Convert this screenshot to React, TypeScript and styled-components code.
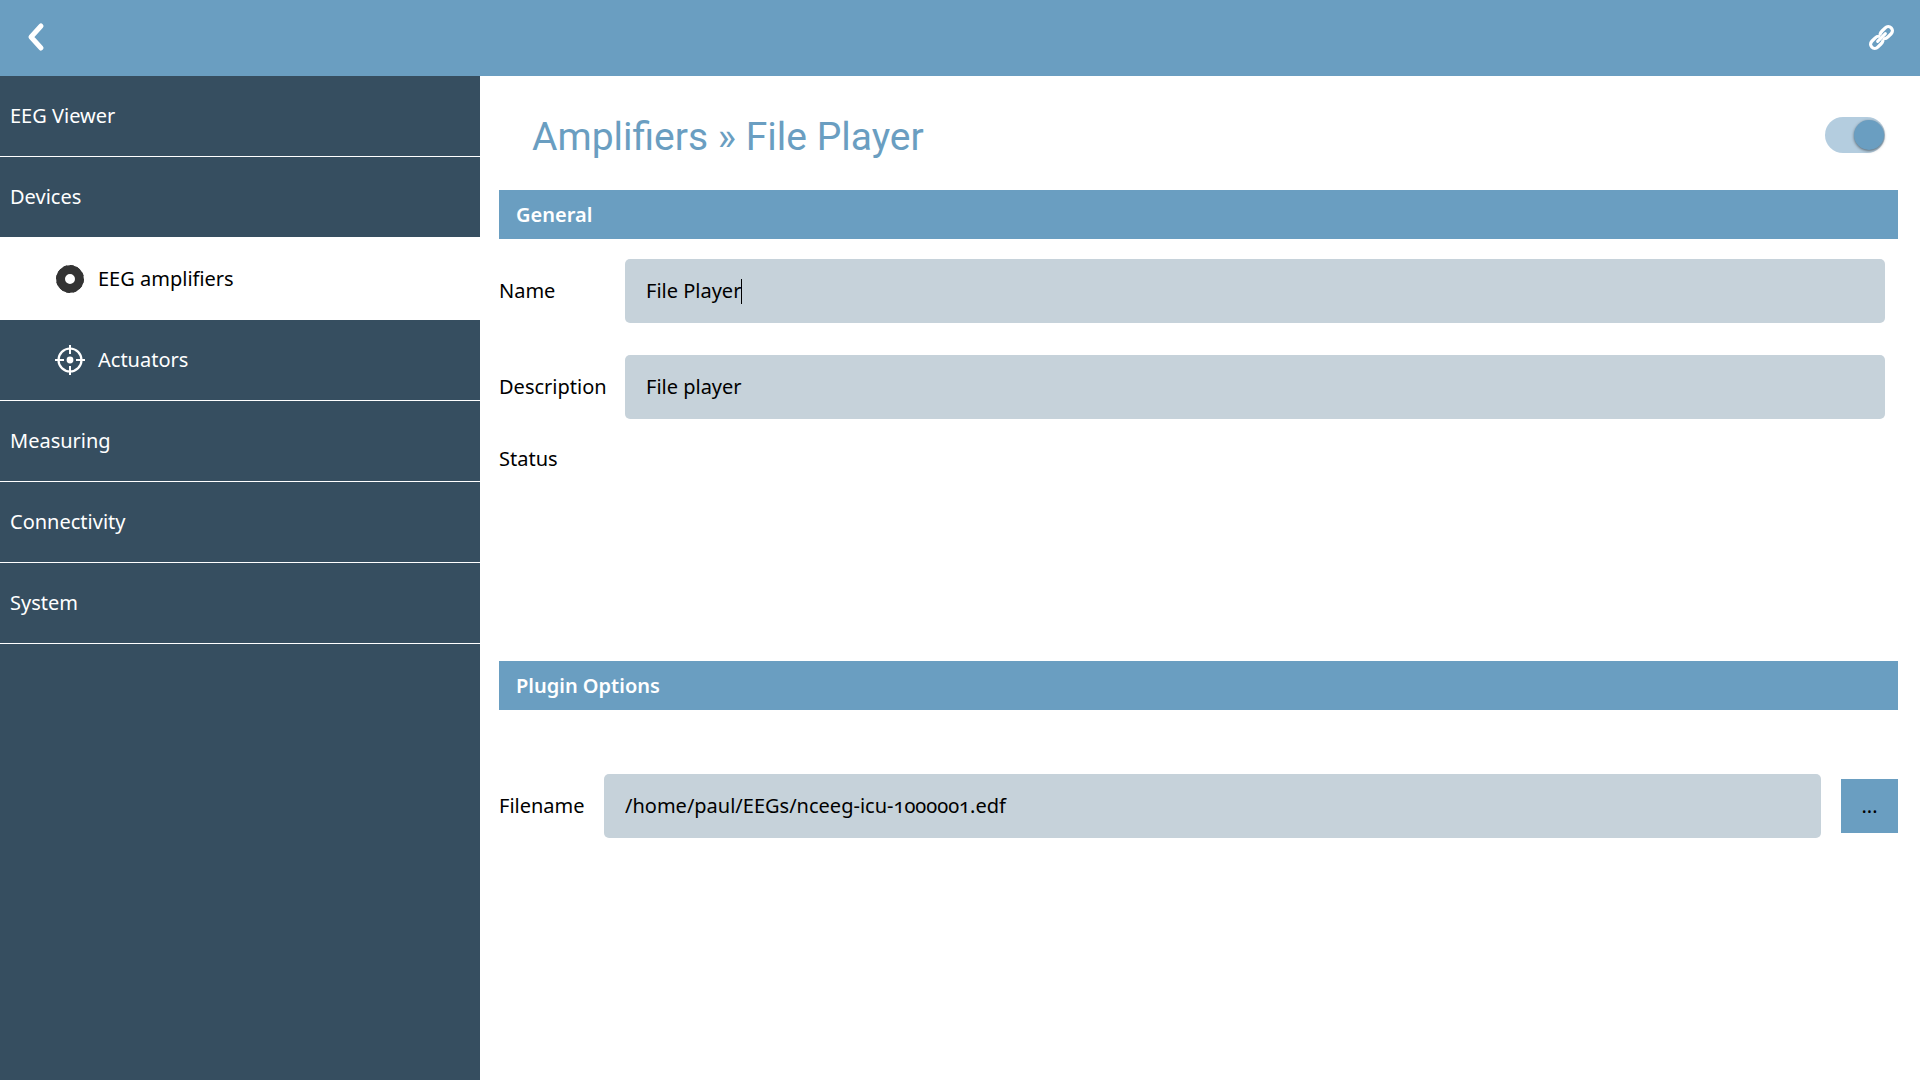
import React, { useLayoutEffect, useRef, useState } from "react";
import styled, { createGlobalStyle } from "styled-components";

const color = {
  accent: "#6a9ec1",
  track: "#b4cddf",
  nav: "#364e60",
  field: "#c6d2da",
  ink: "#000000",
  paper: "#ffffff",
};

const GlobalStyle = createGlobalStyle`
  *, *::before, *::after { box-sizing: border-box; }
  body {
    margin: 0;
    background: ${color.paper};
    color: ${color.ink};
    font: 20px/28px "Noto Sans", "Open Sans", sans-serif;
  }
  button, input { font: inherit; color: inherit; }
`;

const Screen = styled.div`
  display: flex;
  flex-direction: column;
  min-height: 100vh;
`;

const TopBar = styled.header`
  display: flex;
  align-items: center;
  justify-content: space-between;
  height: 76px;
  padding: 0 18px;
  background: ${color.accent};
`;

const IconButton = styled.button`
  display: grid;
  place-items: center;
  width: 40px;
  height: 40px;
  padding: 0;
  border: 0;
  background: none;
  color: ${color.paper};
  cursor: pointer;
`;

const Body = styled.div`
  display: flex;
  flex: 1;
`;

const Sidebar = styled.nav`
  flex: 0 0 25%;
  background: ${color.nav};
`;

const MenuList = styled.ul`
  margin: 0;
  padding: 0;
  list-style: none;
`;

const SubMenu = styled(MenuList)`
  border-top: 1px solid ${color.paper};
`;

const MenuLink = styled.a<{ $nested?: boolean; $active?: boolean }>`
  display: flex;
  align-items: center;
  gap: 13px;
  height: 81px;
  padding-left: ${(p) => (p.$nested ? 55 : 10)}px;
  border-bottom: 1px solid ${color.paper};
  background: ${(p) => (p.$active ? color.paper : color.nav)};
  color: ${(p) => (p.$active ? color.ink : color.paper)};
  text-decoration: none;
`;

const Content = styled.main`
  flex: 1;
  min-width: 0;
  padding: 0 22px 0 19px;
`;

const TitleRow = styled.div`
  display: flex;
  align-items: center;
  justify-content: space-between;
  height: 114px;
  padding: 4px 13px 0 33px;
`;

const Title = styled.h1`
  margin: 0;
  padding-top: 4px;
  color: ${color.accent};
  font: 400 39px/48px Roboto, sans-serif;
`;

const Toggle = styled.input`
  appearance: none;
  display: flex;
  align-items: center;
  width: 60px;
  height: 36px;
  margin: 0;
  padding: 0 1px;
  border-radius: 18px;
  background: ${color.track};
  cursor: pointer;

  &::before {
    content: "";
    width: 30px;
    height: 30px;
    border-radius: 50%;
    background: ${color.accent};
    box-shadow: 0 1px 3px rgba(0, 0, 0, 0.5);
  }
  &:checked::before { margin-left: auto; }
`;

const SectionTitle = styled.h2`
  margin: 0;
  padding: 0 17px;
  background: ${color.accent};
  color: ${color.paper};
  font-size: 20px;
  font-weight: 600;
  line-height: 49px;
`;

const General = styled.section`
  min-height: 471px;
`;

const Fields = styled.div`
  display: grid;
  grid-template-columns: 105px 1fr;
  align-items: center;
  gap: 32px 21px;
  padding: 20px 13px 0 0;
`;

const StatusRow = styled.p`
  margin: 26px 0 0;
`;

const FileRow = styled.div`
  display: grid;
  grid-template-columns: 85px 1fr 57px;
  align-items: center;
  column-gap: 20px;
  padding-top: 64px;
`;

const FieldBox = styled.div`
  position: relative;
  display: flex;
  min-width: 0;
`;

const TextField = styled.input`
  width: 100%;
  min-width: 0;
  height: 64px;
  padding: 0 21px 2px;
  border: 0;
  border-radius: 5px;
  outline: 0;
  background: ${color.field};
  font-variant-numeric: oldstyle-nums;
`;

const Caret = styled.span`
  position: absolute;
  top: 20px;
  width: 1px;
  height: 25px;
  background: ${color.ink};
  pointer-events: none;
`;

const BrowseButton = styled.button`
  height: 54px;
  padding: 0;
  border: 0;
  background: ${color.accent};
  color: ${color.ink};
  cursor: pointer;
`;

const BackIcon = () => (
  <svg width="36" height="36" viewBox="0 0 36 36" fill="none" stroke="currentColor" strokeWidth="5" strokeLinecap="round" strokeLinejoin="round">
    <path d="M21 6 11 17 21 28" />
  </svg>
);

const ChainIcon = () => (
  <svg width="32" height="32" viewBox="0 0 32 32" fill="none" stroke="currentColor" strokeWidth="3.2" strokeLinecap="round">
    <g transform="translate(-.5 -.5) rotate(-45 16 16)">
      <path d="M17.5 12.6 Q19 11.8 21 11.8 H25.5 A4.2 4.2 0 0 1 25.500 20.200 H21 Q18.500 20.200 17 18.800" />
      <path d="M14.500 19.400 Q13 20.200 11 20.200 H6.500 A4.200 4.200 0 0 1 6.500 11.800 H11 Q13.500 11.800 15 13.200" />
      <path d="M10.500 16 H21.500" strokeWidth="3" />
    </g>
  </svg>
);

const ElectrodeIcon = () => (
  <svg width="30" height="30" viewBox="0 0 30 30" fill="none" stroke="#333333">
    <circle cx="15" cy="15" r="9.4" strokeWidth="8.8" />
    <circle cx="15" cy="15" r="13.5" strokeWidth="1" strokeDasharray="4.2 2.8" />
  </svg>
);

const TargetIcon = () => (
  <svg width="30" height="30" viewBox="0 0 30 30" fill="none" stroke="currentColor" strokeWidth="2.2">
    <circle cx="15" cy="15" r="11.5" />
    <path d="M15 0V9M15 21V30M0 15H9M21 15H30" strokeWidth="2" />
    <circle cx="15" cy="15" r="3.4" fill="currentColor" stroke="none" />
  </svg>
);

function NameField({ id }: { id: string }) {
  const [value, setValue] = useState("File Player");
  const [caretX, setCaretX] = useState(0);
  const input = useRef<HTMLInputElement>(null);

  // Keep the insertion mark at the end of the typed name.
  useLayoutEffect(() => {
    const ctx = document.createElement("canvas").getContext("2d");
    if (!ctx || !input.current) return;
    const css = getComputedStyle(input.current);
    ctx.font = `${css.fontSize} ${css.fontFamily}`;
    setCaretX(Math.round(parseFloat(css.paddingLeft) + ctx.measureText(value).width));
  }, [value]);

  return (
    <FieldBox>
      <TextField ref={input} id={id} value={value} onChange={(e) => setValue(e.target.value)} />
      <Caret style={{ left: caretX }} />
    </FieldBox>
  );
}

export default function App() {
  return (
    <>
      <GlobalStyle />
      <Screen>
        <TopBar>
          <IconButton aria-label="Back"><BackIcon /></IconButton>
          <IconButton aria-label="Connection"><ChainIcon /></IconButton>
        </TopBar>
        <Body>
          <Sidebar>
            <MenuList>
              <li><MenuLink href="#viewer">EEG Viewer</MenuLink></li>
              <li>
                <MenuLink href="#devices">Devices</MenuLink>
                <SubMenu>
                  <li><MenuLink href="#amplifiers" $nested $active aria-current="page"><ElectrodeIcon />EEG amplifiers</MenuLink></li>
                  <li><MenuLink href="#actuators" $nested><TargetIcon />Actuators</MenuLink></li>
                </SubMenu>
              </li>
              <li><MenuLink href="#measuring">Measuring</MenuLink></li>
              <li><MenuLink href="#connectivity">Connectivity</MenuLink></li>
              <li><MenuLink href="#system">System</MenuLink></li>
            </MenuList>
          </Sidebar>
          <Content>
            <TitleRow>
              <Title>Amplifiers » File Player</Title>
              <Toggle type="checkbox" role="switch" aria-label="Enabled" defaultChecked />
            </TitleRow>
            <General>
              <SectionTitle>General</SectionTitle>
              <Fields>
                <label htmlFor="name">Name</label>
                <NameField id="name" />
                <label htmlFor="description">Description</label>
                <TextField id="description" defaultValue="File player" />
              </Fields>
              <StatusRow>Status</StatusRow>
            </General>
            <section>
              <SectionTitle>Plugin Options</SectionTitle>
              <FileRow>
                <label htmlFor="filename">Filename</label>
                <TextField id="filename" defaultValue="/home/paul/EEGs/nceeg-icu-1000001.edf" />
                <BrowseButton aria-label="Browse">...</BrowseButton>
              </FileRow>
            </section>
          </Content>
        </Body>
      </Screen>
    </>
  );
}
